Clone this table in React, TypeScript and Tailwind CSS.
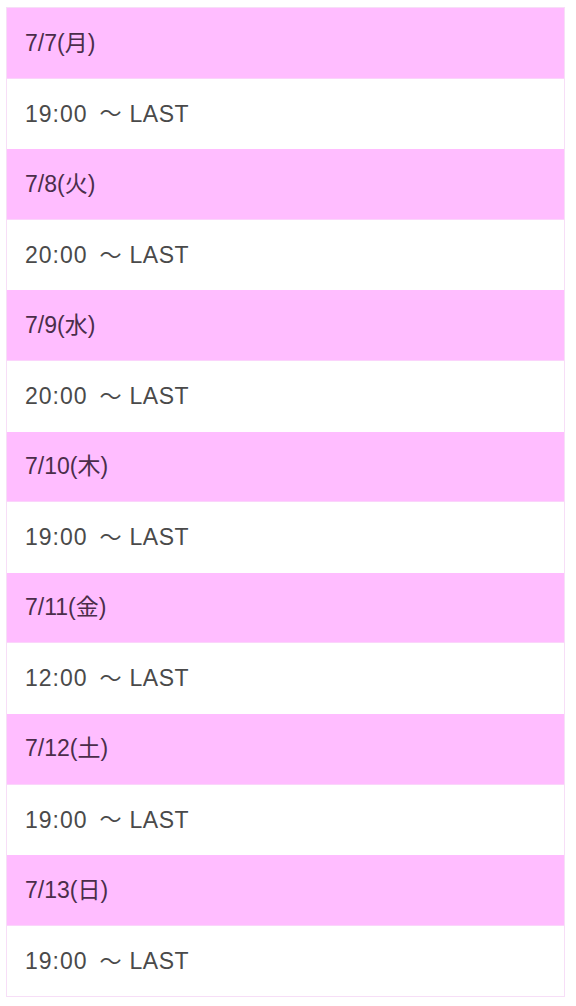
const schedule = [
  { date: "7/7(月)", start: "19:00" },
  { date: "7/8(火)", start: "20:00" },
  { date: "7/9(水)", start: "20:00" },
  { date: "7/10(木)", start: "19:00" },
  { date: "7/11(金)", start: "12:00" },
  { date: "7/12(土)", start: "19:00" },
  { date: "7/13(日)", start: "19:00" },
];

const App = () => {
  return (
    <div
      className="min-h-screen bg-white pt-[7px] pl-[6px]"
      style={{ fontFamily: '"Liberation Sans", "Noto Sans CJK JP", sans-serif' }}
    >
      <div className="w-[559px] border border-[#f7def7]">
        {schedule.map((day) => (
          <div key={day.date}>
            <div className="h-[70.6px] flex items-center pl-[18px] bg-[#ffbdff] text-[23px] text-[#4a2d4a] border-b border-[#fbd4fb]">
              {day.date}
            </div>
            <div className="h-[70.6px] flex items-center pl-[18px] bg-white text-[23px] text-[#4a4a4a] border-b border-[#fbe8fb] last:border-b-0">
              <span className="tracking-[1px]">{day.start}</span>
              <span className="ml-[12px] mr-[8px] text-[22px]">〜</span>
              <span className="tracking-[0.5px]">LAST</span>
            </div>
          </div>
        ))}
      </div>
    </div>
  );
};

export default App;
